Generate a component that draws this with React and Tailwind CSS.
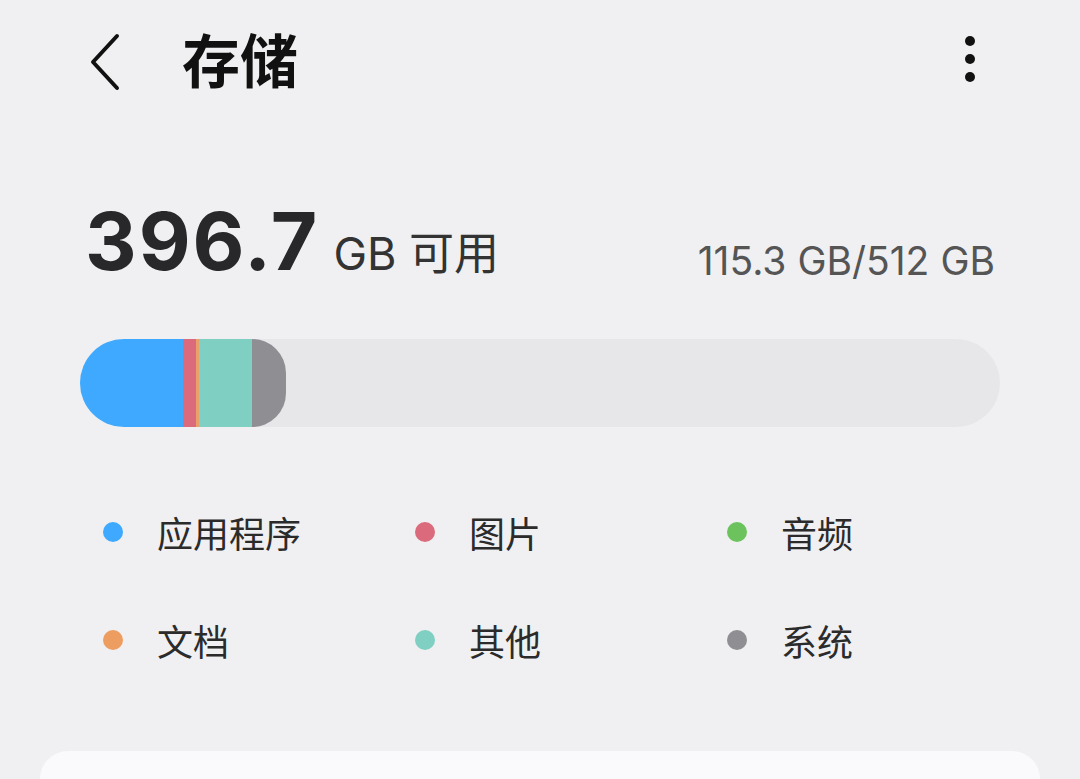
import React from "react";

const FONT = { fontFamily: 'Inter, "Noto Sans CJK SC", sans-serif' };

const segments = [
  { color: "bg-[#3ea9fe]", w: "w-[103px]" },
  { color: "bg-[#db6a7c]", w: "w-[13px]" },
  { color: "bg-[#e9a06a]", w: "w-[3px]" },
  { color: "bg-[#7fcfc2]", w: "w-[53px]" },
  { color: "bg-[#8e8e93] rounded-r-full", w: "w-[34px]" },
];

const legend = [
  { name: "应用程序", dot: "bg-[#3ea9fe]" },
  { name: "图片", dot: "bg-[#db6a7c]" },
  { name: "音频", dot: "bg-[#6cc35d]" },
  { name: "文档", dot: "bg-[#ee9d60]" },
  { name: "其他", dot: "bg-[#7fcfc2]" },
  { name: "系统", dot: "bg-[#8e8e93]" },
];

function App() {
  return (
    <div
      className="w-[1080px] h-[779px] overflow-hidden bg-[#f0f0f2] flex flex-col"
      style={FONT}
    >
      {/* header */}
      <div className="h-[124px] flex items-center pl-[88px] pr-[105px]">
        <svg width="34" height="58" viewBox="0 0 34 58" className="shrink-0">
          <path
            d="M29 3 L5 29 L29 55"
            fill="none"
            stroke="#111"
            strokeWidth="4"
            strokeLinecap="round"
            strokeLinejoin="round"
          />
        </svg>
        <h1 className="ml-[60px] text-[58px] font-bold text-[#111] leading-none">
          存储
        </h1>
        <div className="ml-auto -mt-[6px] flex flex-col gap-[8px] items-center">
          <span className="w-[10px] h-[10px] rounded-full bg-[#111]" />
          <span className="w-[10px] h-[10px] rounded-full bg-[#111]" />
          <span className="w-[10px] h-[10px] rounded-full bg-[#111]" />
        </div>
      </div>

      {/* summary */}
      <div className="mt-[77px] px-[85px] flex items-baseline justify-between">
        <div className="flex items-baseline">
          <span className="text-[80px] font-bold text-[#28282a] leading-none tracking-[2px]">
            396.7
          </span>
          <span className="ml-[14px] text-[45px] text-[#333] leading-none">
            GB 可用
          </span>
        </div>
        <span className="text-[39px] text-[#555] leading-none translate-y-[5px]">
          115.3 GB/512 GB
        </span>
      </div>

      {/* bar */}
      <div className="mt-[58px] mx-[80px] h-[88px] rounded-full bg-[#e7e7e9] overflow-hidden flex">
        {segments.map((s, i) => (
          <div key={i} className={`${s.color} ${s.w} h-full`} />
        ))}
      </div>

      {/* legend */}
      <div className="mt-[84px] pl-[103px] grid grid-cols-[312px_312px_312px] gap-y-[66px]">
        {legend.map((l) => (
          <div key={l.name} className="flex items-center h-[42px]">
            <span className={`w-[20px] h-[20px] rounded-full ${l.dot}`} />
            <span className="ml-[34px] text-[36px] text-[#2b2b2b] leading-none translate-y-[3px]">
              {l.name}
            </span>
          </div>
        ))}
      </div>

      <div className="mt-auto mx-[40px] h-[28px] rounded-t-[44px] bg-[#fafafc]" />
    </div>
  );
}

export default App;
